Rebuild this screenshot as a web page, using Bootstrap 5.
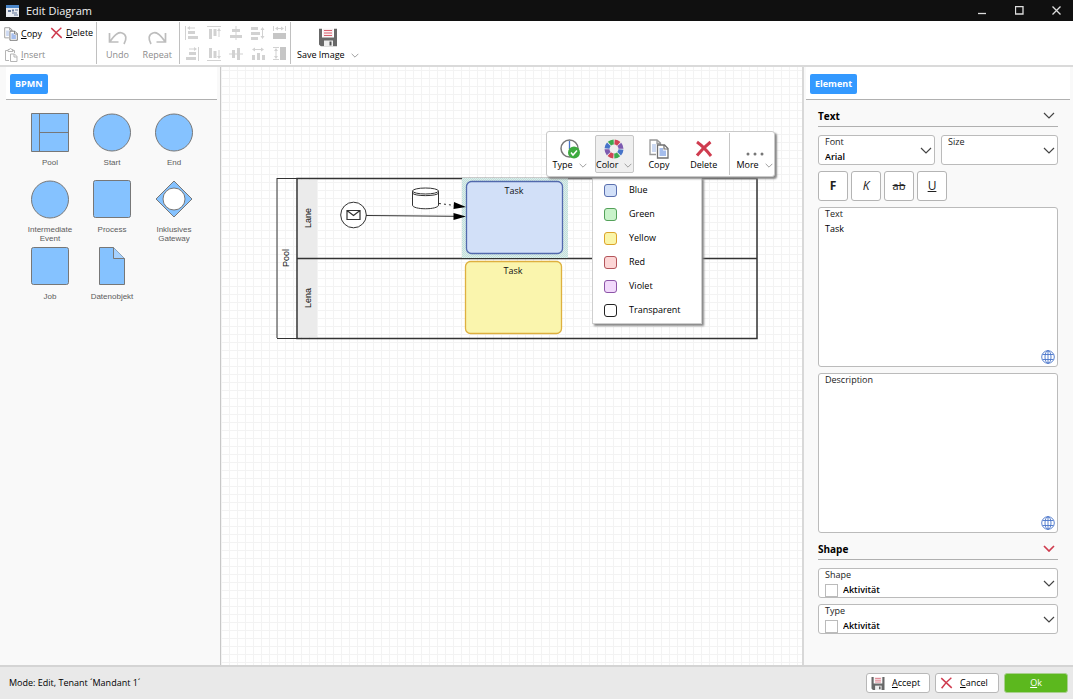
<!DOCTYPE html>
<html lang="en">
<head>
<meta charset="utf-8">
<meta name="viewport" content="width=device-width, initial-scale=1">
<title>Edit Diagram</title>
<link rel="stylesheet" href="https://cdn.jsdelivr.net/npm/bootstrap@5.3.0/dist/css/bootstrap.min.css">
<style>
  body { font-family: "Open Sans", "Noto Sans", sans-serif; font-size: 9px; line-height: 12px; color: #000; background: #fff; }
  svg { display: block; flex: none; }
  button { border: 0; background: none; padding: 0; color: inherit; }
  .titlebar { height: 21px; background: #101010; color: #f2f2f2; padding: 0 12px 0 6px; gap: 7px; }
  .titlebar h1 { font-size: 11px; line-height: 20px; font-weight: 400; }
  .winbuttons { gap: 28px; }
  .ribbon { height: 46px; background: #fff; border-bottom: 2px solid #dadada; padding: 1px 0; }
  .group { border-right: 1px solid #c0c0c0; height: 42px; }
  .off { color: #8c8c8c; }
  .tool { display: flex; align-items: center; gap: 3px; }
  .tool-tall { display: flex; flex-direction: column; align-items: center; gap: 2px; }
  .clipboard { width: 97px; padding: 5px 0 0 4px; display: grid; grid-template-columns: 46px auto; grid-auto-rows: 21px; align-items: start; }
  .history { width: 83px; padding: 7px 7px 0 9px; }
  .aligners { width: 111px; padding: 4px 0 0 5px; display: grid; grid-template-columns: repeat(5, 22px); grid-auto-rows: 21px; align-items: start; }
  .save { padding: 6px 0 0 6px; }
  .with-arrow { display: flex; align-items: center; gap: 6px; }
  .side { background: #f9f9f9; }
  .palette { width: 221px; border-right: 1px solid #c8c8c8; }
  .inspector { width: 271px; border-left: 2px solid #d8d8d8; }
  .tabs { height: 33px; background: #fff; border-bottom: 1px solid #b0b0b0; padding: 7px 0 0 4px; margin: 0 3px 0 6px; }
  .inspector .tabs { margin: 0 3px 0 2px; }
  .tab { display: block; height: 20px; background: #3399ff; color: #fff; font-weight: 700; font-size: 9px; border-radius: 2px; padding: 0 5px; }
  .shapes { display: grid; grid-template-columns: repeat(3, 62px); grid-auto-rows: 67px; padding: 13px 0 0 19px; }
  .shape-item { display: flex; flex-direction: column; align-items: center; gap: 6px; font-family: "Liberation Sans", Arial, sans-serif; font-size: 8px; line-height: 9px; color: #5c5c5c; }
  .shape-item svg { fill: #85c2ff; stroke: #777; }
  .canvas { background-color: #fff; background-image: linear-gradient(#f3f3f3 1px, transparent 1px), linear-gradient(90deg, #f3f3f3 1px, transparent 1px); background-size: 8px 8px; background-position: 0 3px; }
  .float-bar { left: 325px; top: 64px; width: 229px; height: 46px; background: #fff; border: 1px solid #c9c9c9; border-radius: 3px; box-shadow: 2px 2px 2px #888; padding: 3px 0 0 3px; }
  .float-bar .tool-tall { width: 39px; height: 38px; padding-top: 3px; gap: 0; border: 1px solid transparent; border-radius: 2px; }
  .float-bar .tool-tall.picked { background: #efefef; border-color: #c6c6c6; }
  .float-bar .more { border-left: 1px solid #c6c6c6; padding-left: 5px; height: 42px; margin-top: -2px; padding-top: 2px; }
  .colors { left: 371px; top: 110px; width: 110px; background: #fff; border: 1px solid #cfcfcf; border-top: 0; box-shadow: 2px 2px 2px #888; padding: 1px 0; }
  .colors button { display: flex; align-items: center; gap: 12px; height: 24px; width: 100%; padding-left: 11px; }
  .chip { width: 13px; height: 13px; border: 1px solid; border-radius: 3px; }
  .chip-blue { background: #d2e0f8; border-color: #5a6fae; }
  .chip-green { background: #c9f3ca; border-color: #54a15a; }
  .chip-yellow { background: #faf5a8; border-color: #dca42b; }
  .chip-red { background: #fcd6d6; border-color: #b3555b; }
  .chip-violet { background: #f2d9fb; border-color: #8c55a8; }
  .chip-none { background: #fff; border-color: #222; }
  .props { padding: 0 15px 0 14px; }
  .props h2 { font-size: 10px; line-height: 14px; font-weight: 700; margin: 0; }
  .section { height: 27px; padding: 5px 3px 0 0; border-bottom: 1px solid #b0b0b0; margin-bottom: 8px; }
  .pair { gap: 6px; margin-bottom: 6px; }
  .pair .field { flex: 1 1 0; min-width: 0; }
  .fmts { gap: 3px; margin-bottom: 6px; }
  .field { position: relative; margin-bottom: 6px; }
  .pair .field, .field.last { margin-bottom: 0; }
  .field label { position: absolute; left: 7px; top: 1px; font-size: 9px; line-height: 12px; color: #222; }
  .field select, .field textarea { display: block; width: 100%; background: #fff; border: 1px solid #bbb; border-radius: 3px; color: #000; font-size: 9px; line-height: 12px; padding: 13px 6px 0; resize: none; appearance: none; }
  .field select { height: 30px; font-weight: 600; }
  .field textarea { height: 160px; padding-top: 15px; }
  .field.iconic select { padding-left: 24px; }
  .field .chev { position: absolute; right: 3px; top: 12px; pointer-events: none; }
  .swatch { position: absolute; left: 7px; bottom: 1px; width: 13px; height: 13px; border: 1px solid #bbb; background: #fff; pointer-events: none; }
  .globe { position: absolute; right: 3px; bottom: 3px; }
  .fmt { width: 30px; height: 30px; background: #fff; border: 1px solid #b4b4b4; border-radius: 3px; font-size: 12px; color: #222; }
  .fmt.strike { font-size: 11px; }
  .statusbar { height: 34px; background: #e9e9e9; border-top: 2px solid #d4d4d4; padding: 0 5px 0 9px; }
  .acts { gap: 5px; }
  .act { height: 20px; width: 64px; background: #fff; border: 1px solid #b8b8b8; border-radius: 3px; display: flex; align-items: center; padding-left: 4px; gap: 7px; }
  .act.go { background: #5cb81e; border-color: #a9cf8e; color: #fff; justify-content: center; padding: 0; }
</style>
</head>
<body>
<svg width="0" height="0" class="position-absolute" aria-hidden="true">
  <symbol id="i-copy" viewBox="0 0 20 20"><path d="M7 15.500H1V1h7l3.500 3v2M8 1v3.500h3.500" fill="none" stroke="#999" stroke-width="1.300"/><path d="M3 5h4v8H3z" fill="#ccd9f2"/><path d="M8.500 6h7l3.500 3.500V19H8.500z" fill="#fff" stroke="#707070" stroke-width="1.300"/><path d="M15 6v4h4" fill="none" stroke="#707070" stroke-width="1.200"/><path d="M10.500 9h3.500v2.500h3V17h-6.500z" fill="#a5bdec"/></symbol>
  <symbol id="i-x" viewBox="0 0 16 16"><path d="M1 1.500Q7 7 15 14.500M14.500 1Q7 7 1.500 15" fill="none" stroke="#cf3c4f" stroke-width="2"/></symbol>
  <symbol id="i-disk" viewBox="0 0 18 18"><path d="M0 0h3v9h12V0h3v18H2l-2-2z" fill="#686868"/><path d="M4 0h10v8H4z" fill="#f8eef0"/><path d="M5 2h8M5 4.500h8M5 7h8" stroke="#d8606f"/><path d="M5 12h9v6H5z" fill="#eee"/><path d="M10.500 13h2v4h-2z" fill="#555"/></symbol>
  <symbol id="i-chev" viewBox="0 0 12 7"><path d="M1 1l5 5 5-5" fill="none" stroke="currentColor" stroke-width="1.200"/></symbol>
  <symbol id="i-globe" viewBox="0 0 14 14"><g fill="none" stroke="#4774c9" stroke-width=".9"><circle cx="7" cy="7" r="6.300"/><ellipse cx="7" cy="7" rx="3" ry="6.300"/><path d="M7 .7v12.600M1.500 4.500h11M1.500 9.500h11"/></g></symbol>
</svg>

<div class="d-flex flex-column vh-100 overflow-hidden">
  <header class="titlebar d-flex align-items-center flex-shrink-0">
    <svg width="13" height="12" viewBox="0 0 13 12"><path d="M0 0h13v12H0z" fill="#e8ebf0"/><path d="M0 0h13v3H0z" fill="#4b86c8"/><path d="M2 5h3v2H2zM6 4.500h2v2H6zM9 4.500h3v1H9zM6 7.500h5v1H6zM8 9.500h4v1H8z" fill="#65789a"/></svg>
    <h1 class="m-0">Edit Diagram</h1>
    <div class="winbuttons ms-auto d-flex align-items-center">
      <button type="button" aria-label="Minimize"><svg width="9" height="9"><path d="M0 7.500h8" stroke="#ddd" stroke-width="1.300"/></svg></button>
      <button type="button" aria-label="Maximize"><svg width="9" height="9"><path d="M.5.5h7.500v7.500H.5z" fill="none" stroke="#ddd" stroke-width="1.300"/></svg></button>
      <button type="button" aria-label="Close"><svg width="9" height="9"><path d="M.5.5l8 8M8.500.5l-8 8" stroke="#ddd" stroke-width="1.300"/></svg></button>
    </div>
  </header>

  <nav class="ribbon d-flex flex-shrink-0 align-items-start" aria-label="Tools">
    <div class="group clipboard">
      <button type="button" class="tool"><svg width="14" height="14"><use href="#i-copy"/></svg><span><u>C</u>opy</span></button>
      <button type="button" class="tool"><svg width="13" height="12"><use href="#i-x"/></svg><span><u>D</u>elete</span></button>
      <button type="button" class="tool off"><svg width="14" height="14" viewBox="0 0 14 14" fill="none" stroke="#b5b5b5"><path d="M5 12.500H1.500v-10H4M8 2.500h2.500V5M4 3.500v-2h1.500a1 1 0 0 1 2 0H9v2zM6.500 6h4l2.500 2.500v5H6.500zM10 6v3h3"/></svg><span><u>I</u>nsert</span></button>
    </div>
    <div class="group history d-flex justify-content-between align-items-start">
      <button type="button" class="tool-tall off"><svg width="20" height="18" viewBox="0 0 20 18"><path d="M1.500 4v9h9M2 12.500C8 4 11 3 14 4c4.500 1.500 5 6 2 11" fill="none" stroke="#bdbdbd" stroke-width="1.700"/></svg>Undo</button>
      <button type="button" class="tool-tall off"><svg width="20" height="18" viewBox="0 0 20 18"><path d="M18.500 4v9h-9M18 12.500C12 4 9 3 6 4c-4.500 1.500-5 6-2 11" fill="none" stroke="#bdbdbd" stroke-width="1.700"/></svg>Repeat</button>
    </div>
    <div class="group aligners">
      <button type="button" aria-label="Align left"><svg width="14" height="14" fill="#d2d2d2"><path d="M0 0h1v14H0zM3 5h7v3H3zM3 10h10v3H3zM2 2l3-2v1.500h5v1H5V4z"/></svg></button>
      <button type="button" aria-label="Align top"><svg width="14" height="14" fill="#d2d2d2"><path d="M0 0h14v1H0zM2 3h3v10H2zM6.500 3h3v7h-3zM12 2l2 3h-1.500v6h-1V5H10z"/></svg></button>
      <button type="button" aria-label="Align centre"><svg width="14" height="14" fill="#d2d2d2"><path d="M6.500 0h1v14h-1zM3 3h8v3H3zM1 9h12v3H1z"/></svg></button>
      <button type="button" aria-label="Distribute vertically"><svg width="14" height="14" fill="#d2d2d2"><path d="M0 1h7v3H0zM0 6h9v3H0zM0 11h7v3H0zM11.500 1l2 3H12v6h1.500l-2 3-2-3H11V4H9.500z"/></svg></button>
      <button type="button" aria-label="Same width"><svg width="14" height="14" fill="#d2d2d2"><path d="M0 0h1v5H0zM12 0h1v5h-1zM2 2.500l3-2V2h3V.5l3 2-3 2V3H5v1.500z"/><path d="M0 7h13v6H0z" fill="#c6c6c6"/></svg></button>
      <button type="button" aria-label="Align right"><svg width="14" height="14" fill="#d2d2d2"><path d="M13 0h1v14h-1zM4 5h7v3H4zM1 10h10v3H1zM12 2L9 0v1.500H4v1h5V4z"/></svg></button>
      <button type="button" aria-label="Align bottom"><svg width="14" height="14" fill="#d2d2d2"><path d="M0 13h14v1H0zM2 1h3v10H2zM6.500 4h3v7h-3zM12 12l2-3h-1.500V3h-1v6H10z"/></svg></button>
      <button type="button" aria-label="Align middle"><svg width="14" height="14" fill="#d2d2d2"><path d="M0 6.500h14v1H0zM3 3h3v8H3zM8 1h3v12H8z"/></svg></button>
      <button type="button" aria-label="Distribute horizontally"><svg width="14" height="14" fill="#d2d2d2"><path d="M1 8h3v5H1zM6 6h3v7H6zM11 8h3v5h-3zM1 2.500l3-2V2h6V.5l3 2-3 2V3H4v1.500z"/></svg></button>
      <button type="button" aria-label="Same height"><svg width="14" height="14" fill="#d2d2d2"><path d="M0 0h6v1H0zM0 12h6v1H0zM3 1l2 3H3.500v5H5l-2 3-2-3h1.500V4H1z"/><path d="M7 0h6v13H7z" fill="#c6c6c6"/></svg></button>
    </div>
    <button type="button" class="tool-tall save"><svg width="18" height="19" viewBox="0 0 18 18"><use href="#i-disk"/></svg><span class="with-arrow">Save Image<svg width="8" height="5" color="#888"><use href="#i-chev"/></svg></span></button>
  </nav>

  <div class="d-flex flex-grow-1 overflow-hidden">
    <aside class="side palette flex-shrink-0">
      <div class="tabs"><button type="button" class="tab">BPMN</button></div>
      <div class="shapes">
        <div class="shape-item"><svg width="38" height="39"><path d="M.5.5h37v38H.5zM8.500.5v38M8.500 19.500h29"/></svg>Pool</div>
        <div class="shape-item"><svg width="38" height="39"><circle cx="19" cy="19.500" r="18.500"/></svg>Start</div>
        <div class="shape-item"><svg width="38" height="39"><circle cx="19" cy="19.500" r="18.500"/></svg>End</div>
        <div class="shape-item"><svg width="38" height="39"><circle cx="19" cy="19.500" r="18.500"/></svg><span class="text-center">Intermediate<br>Event</span></div>
        <div class="shape-item"><svg width="38" height="39"><rect x=".5" y=".5" width="37" height="37" rx="2"/></svg>Process</div>
        <div class="shape-item"><svg width="38" height="39"><path d="M19 1l18 18-18 18L1 19z"/><circle cx="19" cy="19" r="11" fill="#fff"/></svg><span class="text-center">Inklusives<br>Gateway</span></div>
        <div class="shape-item"><svg width="38" height="39"><rect x=".5" y=".5" width="37" height="37" rx="2"/></svg>Job</div>
        <div class="shape-item"><svg width="38" height="39"><path d="M6.500.5h14l11 11v26h-25z"/><path d="M20.500.5v11h11" fill="#a5d1ff"/></svg>Datenobjekt</div>
      </div>
    </aside>

    <main class="canvas flex-grow-1 position-relative overflow-hidden">
      <svg width="582" height="300" viewBox="221 67 582 300" font-size="9" fill="none" stroke="#333">
        <defs><pattern id="halo" width="2" height="2" patternUnits="userSpaceOnUse"><path d="M0 0h2v2H0z" fill="#dff0e6" stroke="none"/><path d="M0 0h1v1H0zM1 1h1v1H1z" fill="#bfdde0" stroke="none"/></pattern></defs>
        <path d="M298 180h19v157h-19z" fill="#ebebeb" stroke="none"/>
        <path d="M277 178.500h20M277 178v160M277 338.500h20"/>
        <path d="M297 178.500h460v160H297zM297 258.500h460" stroke-width="1.500"/>
        <g fill="#111" stroke="none" text-anchor="middle" font-family="Liberation Sans, Arial, sans-serif">
          <text transform="translate(289 258) rotate(-90)">Pool</text>
          <text transform="translate(311 218) rotate(-90)">Lane</text>
          <text transform="translate(311 298) rotate(-90)">Lena</text>
        </g>
        <circle cx="353.500" cy="215" r="12.800" fill="#fff"/>
        <path d="M347 210.500h13v9h-13zM347 210.500l6.500 5 6.500-5" stroke-width="1.200"/>
        <path d="M412.500 191v14c0 5 26 5 26 0v-14" fill="#fff"/>
        <ellipse cx="425.500" cy="191" rx="13" ry="3" fill="#fff"/>
        <path d="M412.500 193c1 3.500 25 3.500 26 0"/>
        <path d="M366 215.500l90 .8"/>
        <path d="M439 203.500l16 2" stroke-dasharray="2 3"/>
        <path d="M462 178h106v80H462z" fill="url(#halo)" stroke="none"/>
        <path d="M454 202l12 5-12.500 2zM453.500 213l12.500 3.500-12.500 3.500z" fill="#000" stroke="none"/>
        <rect x="466.500" y="181.500" width="96" height="72" rx="5" fill="#d2e0f8" stroke="#5269ad" stroke-width="1.300"/>
        <rect x="465.500" y="261.500" width="96" height="72" rx="5" fill="#faf5ad" stroke="#deb03f" stroke-width="1.300"/>
        <g fill="#111" stroke="none" text-anchor="middle"><text x="514" y="194">Task</text><text x="513" y="274">Task</text></g>
      </svg>

      <div class="colors position-absolute" role="menu">
        <button type="button" role="menuitem"><span class="chip chip-blue"></span>Blue</button>
        <button type="button" role="menuitem"><span class="chip chip-green"></span>Green</button>
        <button type="button" role="menuitem"><span class="chip chip-yellow"></span>Yellow</button>
        <button type="button" role="menuitem"><span class="chip chip-red"></span>Red</button>
        <button type="button" role="menuitem"><span class="chip chip-violet"></span>Violet</button>
        <button type="button" role="menuitem"><span class="chip chip-none"></span>Transparent</button>
      </div>
      <div class="float-bar position-absolute d-flex justify-content-between align-items-start" role="toolbar" aria-label="Element tools">
        <button type="button" class="tool-tall"><svg width="22" height="20" viewBox="0 0 22 20"><circle cx="10.500" cy="9.500" r="8.500" fill="#fff" stroke="#777" stroke-width="1.500"/><path d="M10.500 2v8" stroke="#4774c9" stroke-width="1.300"/><circle cx="15" cy="13.500" r="6" fill="#3daa3f"/><path d="M12 13.500l2 2.500 4-4.500" fill="none" stroke="#fff" stroke-width="1.500"/></svg><span class="with-arrow">Type<svg width="8" height="5" color="#888"><use href="#i-chev"/></svg></span></button>
        <button type="button" class="tool-tall picked"><svg width="20" height="20" viewBox="-10 -10 20 20" fill="none" stroke-width="5"><circle r="7" stroke="#d04556" pathLength="80" stroke-dasharray="8.500 71.500" stroke-dashoffset="19"/><circle r="7" stroke="#7d5bb0" pathLength="80" stroke-dasharray="8.500 71.500" stroke-dashoffset="9"/><circle r="7" stroke="#4774c9" pathLength="80" stroke-dasharray="8.500 71.500" stroke-dashoffset="-1"/><circle r="7" stroke="#3daa4f" pathLength="80" stroke-dasharray="8.500 71.500" stroke-dashoffset="-11"/><circle r="7" stroke="#d04556" pathLength="80" stroke-dasharray="8.500 71.500" stroke-dashoffset="-21"/><circle r="7" stroke="#7d5bb0" pathLength="80" stroke-dasharray="8.500 71.500" stroke-dashoffset="-31"/><circle r="7" stroke="#4774c9" pathLength="80" stroke-dasharray="8.500 71.500" stroke-dashoffset="-41"/><circle r="7" stroke="#3daa4f" pathLength="80" stroke-dasharray="8.500 71.500" stroke-dashoffset="-51"/></svg><span class="with-arrow">Color<svg width="8" height="5" color="#888"><use href="#i-chev"/></svg></span></button>
        <button type="button" class="tool-tall"><svg width="20" height="20"><use href="#i-copy"/></svg>Copy</button>
        <button type="button" class="tool-tall"><svg width="20" height="20" viewBox="0 0 20 20"><path d="M3 3q7 5 14 14M16.500 3Q9 9 3 16.500" stroke="#cf3c4f" stroke-width="3" fill="none"/></svg>Delete</button>
        <span class="more"><button type="button" class="tool-tall"><svg width="20" height="20" fill="#777"><circle cx="3" cy="15" r="1.500"/><circle cx="10" cy="15" r="1.500"/><circle cx="17" cy="15" r="1.500"/></svg><span class="with-arrow">More<svg width="8" height="5" color="#888"><use href="#i-chev"/></svg></span></button></span>
      </div>
    </main>

    <aside class="side inspector flex-shrink-0">
      <div class="tabs"><button type="button" class="tab">Element</button></div>
      <div class="props">
        <div class="section d-flex justify-content-between align-items-center"><h2>Text</h2><svg width="12" height="7" color="#444"><use href="#i-chev"/></svg></div>
        <div class="pair d-flex">
          <div class="field"><label for="font">Font</label><select id="font"><option>Arial</option></select><svg class="chev" width="12" height="7" color="#444"><use href="#i-chev"/></svg></div>
          <div class="field"><label for="size">Size</label><select id="size"><option></option></select><svg class="chev" width="12" height="7" color="#444"><use href="#i-chev"/></svg></div>
        </div>
        <div class="d-flex fmts">
          <button type="button" class="fmt fw-bold">F</button>
          <button type="button" class="fmt fst-italic">K</button>
          <button type="button" class="fmt strike"><s>ab</s></button>
          <button type="button" class="fmt"><u>U</u></button>
        </div>
        <div class="field"><label for="txt">Text</label><textarea id="txt">Task</textarea><svg class="globe" width="14" height="14"><use href="#i-globe"/></svg></div>
        <div class="field last"><label for="desc">Description</label><textarea id="desc"></textarea><svg class="globe" width="14" height="14"><use href="#i-globe"/></svg></div>
        <div class="section d-flex justify-content-between align-items-center"><h2>Shape</h2><svg width="12" height="7" color="#cf3c4f" viewBox="0 0 12 7"><path d="M1 1l5 5 5-5" fill="none" stroke="currentColor" stroke-width="1.700"/></svg></div>
        <div class="field iconic"><label for="shape">Shape</label><select id="shape"><option>Aktivität</option></select><span class="swatch"></span><svg class="chev" width="12" height="7" color="#444"><use href="#i-chev"/></svg></div>
        <div class="field iconic"><label for="type">Type</label><select id="type"><option>Aktivität</option></select><span class="swatch"></span><svg class="chev" width="12" height="7" color="#444"><use href="#i-chev"/></svg></div>
      </div>
    </aside>
  </div>

  <footer class="statusbar d-flex align-items-center flex-shrink-0">
    <span>Mode: Edit, Tenant ´Mandant 1´</span>
    <div class="acts d-flex ms-auto">
      <button type="button" class="act"><svg width="14" height="13"><use href="#i-disk"/></svg><span><u>A</u>ccept</span></button>
      <button type="button" class="act"><svg width="13" height="12"><use href="#i-x"/></svg><span><u>C</u>ancel</span></button>
      <button type="button" class="act go"><span><u>O</u>k</span></button>
    </div>
  </footer>
</div>
<script src="https://cdn.jsdelivr.net/npm/bootstrap@5.3.0/dist/js/bootstrap.bundle.min.js"></script>
</body>
</html>
